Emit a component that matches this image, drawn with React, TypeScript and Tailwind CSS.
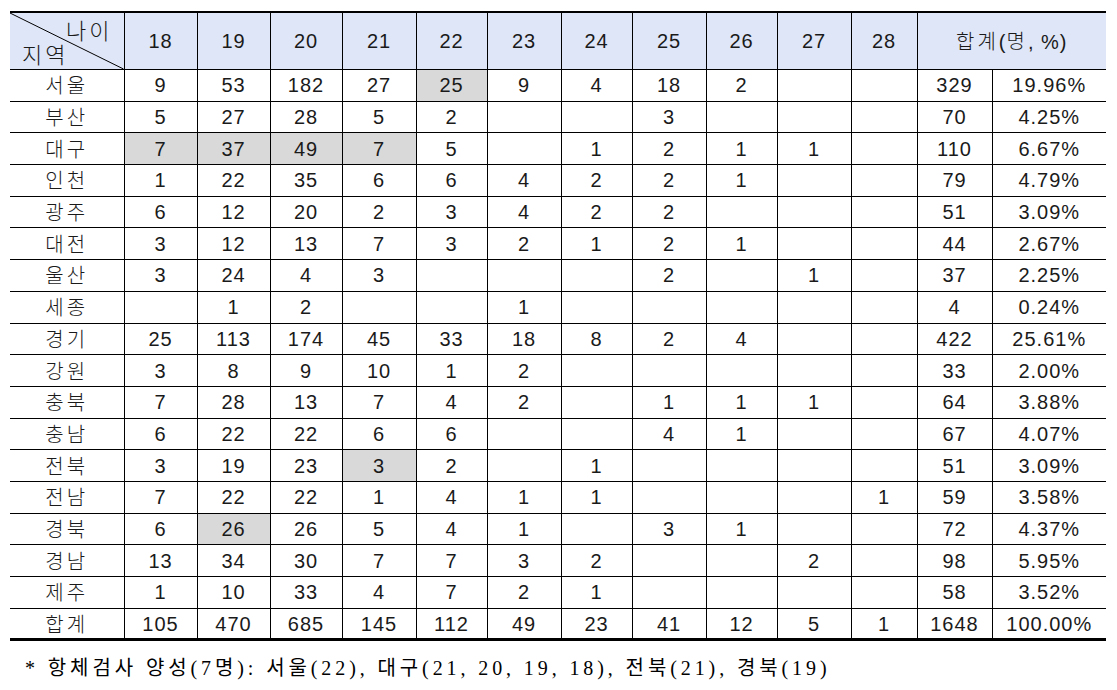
const widths = [114, 73, 73, 72, 74, 71, 74, 71, 74, 71, 74, 66, 75, 114];
const ages = ['18', '19', '20', '21', '22', '23', '24', '25', '26', '27', '28'];

// value with a trailing "g" = shaded cell
const rows: [string, string[]][] = [
  ['서울', ['9', '53', '182', '27', '25g', '9', '4', '18', '2', '', '', '329', '19.96%']],
  ['부산', ['5', '27', '28', '5', '2', '', '', '3', '', '', '', '70', '4.25%']],
  ['대구', ['7g', '37g', '49g', '7g', '5', '', '1', '2', '1', '1', '', '110', '6.67%']],
  ['인천', ['1', '22', '35', '6', '6', '4', '2', '2', '1', '', '', '79', '4.79%']],
  ['광주', ['6', '12', '20', '2', '3', '4', '2', '2', '', '', '', '51', '3.09%']],
  ['대전', ['3', '12', '13', '7', '3', '2', '1', '2', '1', '', '', '44', '2.67%']],
  ['울산', ['3', '24', '4', '3', '', '', '', '2', '', '1', '', '37', '2.25%']],
  ['세종', ['', '1', '2', '', '', '1', '', '', '', '', '', '4', '0.24%']],
  ['경기', ['25', '113', '174', '45', '33', '18', '8', '2', '4', '', '', '422', '25.61%']],
  ['강원', ['3', '8', '9', '10', '1', '2', '', '', '', '', '', '33', '2.00%']],
  ['충북', ['7', '28', '13', '7', '4', '2', '', '1', '1', '1', '', '64', '3.88%']],
  ['충남', ['6', '22', '22', '6', '6', '', '', '4', '1', '', '', '67', '4.07%']],
  ['전북', ['3', '19', '23', '3g', '2', '', '1', '', '', '', '', '51', '3.09%']],
  ['전남', ['7', '22', '22', '1', '4', '1', '1', '', '', '', '1', '59', '3.58%']],
  ['경북', ['6', '26g', '26', '5', '4', '1', '', '3', '1', '', '', '72', '4.37%']],
  ['경남', ['13', '34', '30', '7', '7', '3', '2', '', '', '2', '', '98', '5.95%']],
  ['제주', ['1', '10', '33', '4', '7', '2', '1', '', '', '', '', '58', '3.52%']],
  ['합계', ['105', '470', '685', '145', '112', '49', '23', '41', '12', '5', '1', '1648', '100.00%']],
];

const num = "font-['Liberation_Sans',Arial,sans-serif] text-[20px] tracking-[1px]";
const kor = "font-['Noto_Sans_CJK_KR',sans-serif] font-light text-[20px] tracking-[3px]";

export default function App() {
  return (
    <div className="w-[1117px] h-[690px] bg-white text-[#1a1a1a] pt-[11px]">
      <table className="ml-[10px] w-[1096px] table-fixed border-collapse border-t-2 border-b-[3px] border-black">
        <colgroup>
          {widths.map((w, i) => (
            <col key={i} style={{ width: w }} />
          ))}
        </colgroup>
        <thead>
          <tr className="h-[57px] bg-[#dfe6f7]">
            <th className="relative p-0 border-r border-b border-black font-normal">
              <svg className="absolute inset-0 w-full h-full" preserveAspectRatio="none" viewBox="0 0 100 100">
                <line x1="0" y1="0" x2="100" y2="100" stroke="#000" strokeWidth="1" vectorEffect="non-scaling-stroke" />
              </svg>
              <div className={`relative flex flex-col h-[56px] leading-[22px] ${kor} text-[22px]`}>
                <span className="self-end pr-[11px] pt-[5px]">나이</span>
                <span className="self-start pl-[12px] pt-[2px]">지역</span>
              </div>
            </th>
            {ages.map((a) => (
              <th key={a} className={`p-0 border-r border-b border-black font-normal ${num}`}>
                {a}
              </th>
            ))}
            <th colSpan={2} className="p-0 border-b border-black font-normal">
              <span className={kor}>합계</span>
              <span className={num}>(</span>
              <span className={kor}>명</span>
              <span className={num}>, %)</span>
            </th>
          </tr>
        </thead>
        <tbody>
          {rows.map(([name, vals]) => (
            <tr key={name} className="h-[31.7px]">
              <td className={`p-0 text-center border-r border-b border-black leading-none ${kor}`}>{name}</td>
              {vals.map((v, i) => {
                const shaded = v.endsWith('g');
                const text = shaded ? v.slice(0, -1) : v;
                const last = i === vals.length - 1;
                return (
                  <td
                    key={i}
                    className={`p-0 text-center border-b border-black leading-none ${num} ${last ? '' : 'border-r'} ${shaded ? 'bg-[#d9d9d9]' : ''}`}
                  >
                    {text}
                  </td>
                );
              })}
            </tr>
          ))}
        </tbody>
      </table>
      <p className="mt-[16px] pl-[25px] text-[20px] leading-[22px] text-black font-['Liberation_Serif','Noto_Sans_CJK_KR',serif] tracking-[3.9px] whitespace-nowrap">
        * 항체검사 양성(7명): 서울(22), 대구(21, 20, 19, 18), 전북(21), 경북(19)
      </p>
    </div>
  );
}
